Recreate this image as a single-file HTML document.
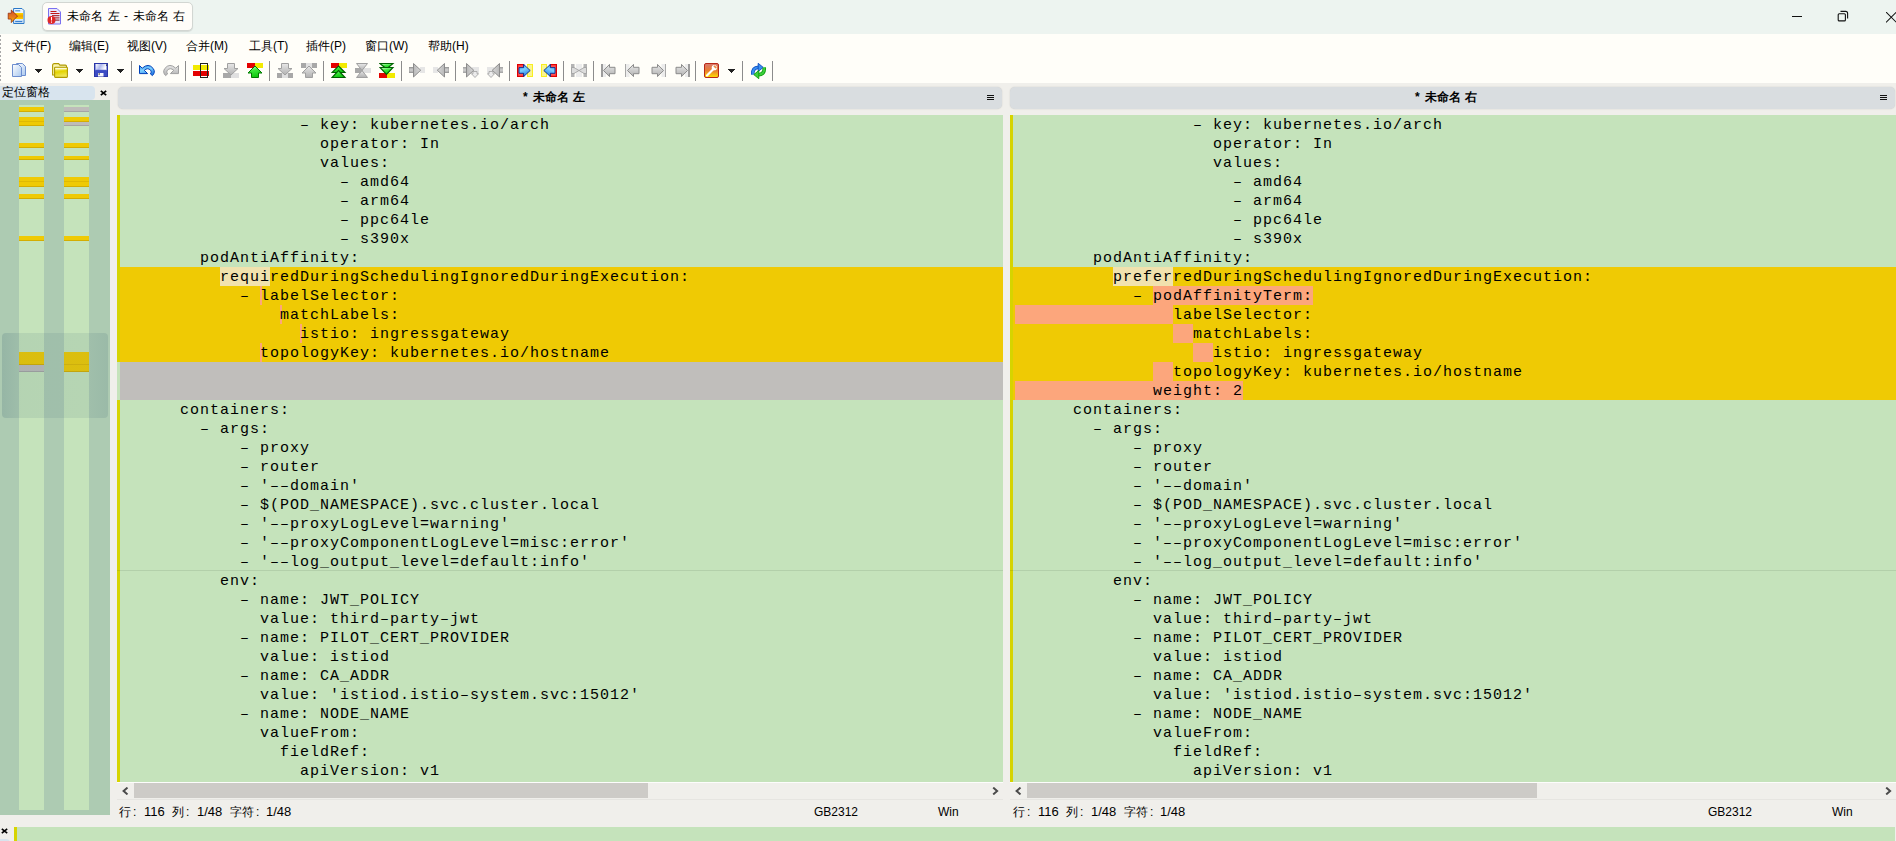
<!DOCTYPE html>
<html><head><meta charset="utf-8"><style>
*{margin:0;padding:0;box-sizing:border-box}
html,body{width:1896px;height:841px;overflow:hidden;background:#f0efeb;font-family:"Liberation Sans",sans-serif;font-size:12px;color:#000}
.abs{position:absolute}
.code{position:absolute;background:#c5e3bb;overflow:hidden}
.ln{position:absolute;font-family:"Liberation Mono",monospace;font-size:15px;letter-spacing:1px;line-height:19px;height:19px;white-space:pre;color:#000}
#title{position:absolute;left:0;top:0;width:1896px;height:34px;background:#edf4f0}
#menu{position:absolute;left:0;top:34px;width:1896px;height:49px;background:#fffef9}
.mi{position:absolute;top:38px;line-height:16px;font-size:12px}
.sep{position:absolute;top:61px;width:1px;height:20px;background:#8c8c8c}
.hdr{position:absolute;top:87px;height:22px;background:#d9dde0;border-radius:5px;box-shadow:0 0 1.5px rgba(0,0,0,.18);font-weight:bold;text-align:center;line-height:23px}
.sb{position:absolute;top:782px;height:18px;background:#f0efeb;border-top:1px solid #fdfdfc;border-bottom:1px solid #e6e5e1}
.thumb{position:absolute;top:0;height:15px;background:#cdcbc7}
.ht{top:89px;line-height:16px;font-size:12px;font-weight:bold}
.st{position:absolute;top:804px;line-height:16px;font-size:12px}
</style></head>
<body>
<div id="title"></div>
<div class="abs" style="left:42px;top:2px;width:151px;height:29px;background:#fffdf9;border:1px solid #d2d6d2;border-radius:5px;box-shadow:0 1px 1px rgba(0,0,0,.10)"></div>
<div class="abs" style="left:67px;top:8px;line-height:16px;font-size:12px;word-spacing:1.2px">未命名 左 - 未命名 右</div>
<svg class="abs" style="left:7px;top:7px" width="18" height="18" viewBox="0 0 18 18"><defs><linearGradient id="garr" x1="0" y1="0" x2="0" y2="1"><stop offset="0" stop-color="#d04a2a"/><stop offset="0.6" stop-color="#e8801c"/><stop offset="1" stop-color="#ffc000"/></linearGradient><linearGradient id="gband" x1="0" y1="0" x2="0" y2="1"><stop offset="0" stop-color="#ffd800"/><stop offset="0.5" stop-color="#f0a000"/><stop offset="1" stop-color="#ffd000"/></linearGradient></defs><path d="M6.6 1.5h8.4l2 2v13h-10.4z" fill="#eef5fc" stroke="#2a78c8"/><rect x="8.2" y="3.2" width="5" height="1.2" fill="#4a90d8"/><rect x="7.2" y="6" width="8.9" height="6" fill="url(#gband)"/><rect x="7.2" y="12.5" width="8.9" height="3.2" fill="#c4dcf4"/><rect x="8.2" y="14" width="7" height="1.1" fill="#3a80d0"/><path d="M1.2 6.2h3.1v-3.2l6.2 6l-6.2 6.6v-3.5h-3.1z" fill="url(#garr)" stroke="#8a2000" stroke-width="0.7"/></svg>
<svg class="abs" style="left:47px;top:7px" width="16" height="18" viewBox="0 0 16 18"><path d="M1.5 1.5h8.5l3.5 3.5v12h-12z" fill="#e8e6fc" stroke="#7a70f0"/><rect x="3.5" y="4" width="6" height="1" fill="#c01818"/><rect x="3.5" y="6" width="9" height="1" fill="#c01818"/><rect x="5" y="8.2" width="7.5" height="1" fill="#a01010"/><rect x="5" y="10.4" width="7.5" height="1" fill="#a01010"/><rect x="5" y="12.6" width="7.5" height="1" fill="#801010"/><circle cx="4.5" cy="13" r="4" fill="#e02828"/><rect x="4" y="10" width="1" height="3.5" fill="#fff"/><rect x="4" y="14.5" width="1" height="1.2" fill="#fff"/></svg>
<svg class="abs" style="left:1792px;top:16px" width="10" height="1" viewBox="0 0 10 1" shape-rendering="crispEdges"><rect x="0" y="0" width="10" height="1" fill="#111"/></svg>
<svg class="abs" style="left:1837px;top:10px" width="12" height="12" viewBox="0 0 12 12"><rect x="1.2" y="3.7" width="7.2" height="7.2" rx="1" fill="none" stroke="#111" stroke-width="1.1"/><path d="M3.5 1.4h5.1q2 0 2 2v5.1" fill="none" stroke="#111" stroke-width="1.1"/></svg>
<svg class="abs" style="left:1886px;top:12px" width="11" height="11" viewBox="0 0 11 11"><path d="M0 0l10.5 10.5M10.5 0l-10.5 10.5" stroke="#111" stroke-width="1.05"/></svg>
<div id="menu"></div>
<div class="mi" style="left:12px">文件(F)</div>
<div class="mi" style="left:69px">编辑(E)</div>
<div class="mi" style="left:127px">视图(V)</div>
<div class="mi" style="left:186px">合并(M)</div>
<div class="mi" style="left:249px">工具(T)</div>
<div class="mi" style="left:306px">插件(P)</div>
<div class="mi" style="left:365px">窗口(W)</div>
<div class="mi" style="left:428px">帮助(H)</div>
<div class="sep" style="left:131px"></div>
<div class="sep" style="left:185px"></div>
<div class="sep" style="left:215px"></div>
<div class="sep" style="left:269px"></div>
<div class="sep" style="left:323px"></div>
<div class="sep" style="left:401px"></div>
<div class="sep" style="left:455px"></div>
<div class="sep" style="left:509px"></div>
<div class="sep" style="left:563px"></div>
<div class="sep" style="left:593px"></div>
<div class="sep" style="left:695px"></div>
<div class="sep" style="left:742px"></div>
<div class="sep" style="left:772px"></div>
<svg class="abs" style="left:0px;top:0px" width="1" height="1" viewBox="0 0 1 1"><defs>
<linearGradient id="gpage" x1="0" y1="0" x2="1" y2="1"><stop offset="0" stop-color="#ffffff"/><stop offset="1" stop-color="#a9c8ee"/></linearGradient>
<linearGradient id="gfold" x1="0" y1="0" x2="0.2" y2="1"><stop offset="0" stop-color="#fff8b0"/><stop offset="0.5" stop-color="#e4d400"/><stop offset="1" stop-color="#f0e860"/></linearGradient>
<linearGradient id="ggreen" x1="0" y1="0" x2="0.3" y2="1"><stop offset="0" stop-color="#e0ffe0"/><stop offset="0.45" stop-color="#3ce83c"/><stop offset="1" stop-color="#10c810"/></linearGradient>
<linearGradient id="ggray" x1="0" y1="0" x2="0" y2="1"><stop offset="0" stop-color="#e8e8e8"/><stop offset="1" stop-color="#b0b0b0"/></linearGradient>
<linearGradient id="gblue" x1="0" y1="0" x2="0.4" y2="1"><stop offset="0" stop-color="#3a98f0"/><stop offset="0.5" stop-color="#7cd0ff"/><stop offset="1" stop-color="#2a80e8"/></linearGradient>
<linearGradient id="gwrench" x1="0" y1="0" x2="0" y2="1"><stop offset="0" stop-color="#d87870"/><stop offset="0.5" stop-color="#e87c30"/><stop offset="1" stop-color="#ffe000"/></linearGradient>
<linearGradient id="ggray2" x1="0" y1="0" x2="0" y2="1"><stop offset="0" stop-color="#a0a0a0"/><stop offset="0.5" stop-color="#d0d0d0"/><stop offset="1" stop-color="#a0a0a0"/></linearGradient><linearGradient id="ggray3" x1="0" y1="0" x2="1" y2="0"><stop offset="0" stop-color="#b8b8b8"/><stop offset="1" stop-color="#d8d8d8"/></linearGradient>
</defs></svg>
<svg class="abs" style="left:12px;top:63px" width="16" height="16" viewBox="0 0 16 16"><path d="M4.5 0.5h6l3 3v9h-9z" fill="url(#gpage)" stroke="#6d8ecf"/><path d="M0.5 1.5h6l3 3v9h-9z" fill="url(#gpage)" stroke="#6d8ecf"/></svg>
<svg class="abs" style="left:35px;top:69px" width="7" height="4" viewBox="0 0 7 4" shape-rendering="crispEdges"><path d="M0 0h7l-3.5 4z" fill="#222"/></svg>
<svg class="abs" style="left:76px;top:69px" width="7" height="4" viewBox="0 0 7 4" shape-rendering="crispEdges"><path d="M0 0h7l-3.5 4z" fill="#222"/></svg>
<svg class="abs" style="left:117px;top:69px" width="7" height="4" viewBox="0 0 7 4" shape-rendering="crispEdges"><path d="M0 0h7l-3.5 4z" fill="#222"/></svg>
<svg class="abs" style="left:52px;top:63px" width="16" height="15" viewBox="0 0 16 15"><path d="M0.6 12V2.3Q0.6 0.6 2.3 0.6H6.6L7.9 2.1H13.4Q14.5 2.1 14.5 3.2V12Z" fill="#faf4b0" stroke="#b09a00" stroke-width="1.1"/><rect x="2.6" y="4.3" width="12.8" height="10.1" rx="0.8" fill="url(#gfold)" stroke="#b09a00" stroke-width="1.1"/><rect x="3.3" y="5.1" width="11.4" height="1.2" fill="#fffbe0"/></svg>
<svg class="abs" style="left:94px;top:63px" width="14" height="14" viewBox="0 0 14 14"><defs><linearGradient id="glab" x1="0" y1="0" x2="1" y2="0.3"><stop offset="0" stop-color="#ffffff"/><stop offset="0.5" stop-color="#aeb8ee"/><stop offset="1" stop-color="#ffffff"/></linearGradient></defs><rect x="0.5" y="0.5" width="13" height="13" fill="#3c4cc4" stroke="#2a36a8"/><rect x="1.5" y="1" width="11" height="6.2" fill="url(#glab)"/><rect x="2" y="6.8" width="10" height="1" fill="#3c4cc4"/><rect x="4" y="10" width="5.5" height="3.5" fill="#f4f4fc"/><rect x="4.6" y="10.4" width="1.2" height="1.2" fill="#111"/><rect x="12" y="1.6" width="1" height="1" fill="#111"/></svg>
<svg class="abs" style="left:139px;top:64px" width="16" height="13" viewBox="0 0 16 13"><path d="M0.5 1.5L3.2 4.2Q9.5 -1.5 14.2 4.5Q16.8 8.2 13.4 11.6L11.4 9.9Q13.2 8 11.6 6.2Q8.6 3.2 5.3 6.3L8.6 9.6L0.5 9.6Z" fill="url(#gblue)" stroke="#0040b8" stroke-width="1"/></svg>
<svg class="abs" style="left:163px;top:64px" width="16" height="13" viewBox="0 0 16 13"><g transform="translate(16 0) scale(-1 1)"><path d="M0.5 1.5L3.2 4.2Q9.5 -1.5 14.2 4.5Q16.8 8.2 13.4 11.6L11.4 9.9Q13.2 8 11.6 6.2Q8.6 3.2 5.3 6.3L8.6 9.6L0.5 9.6Z" fill="url(#ggray)" stroke="#a0a0a0" stroke-width="1"/></g></svg>
<svg class="abs" style="left:193px;top:63px" width="16" height="16" viewBox="0 0 16 16" shape-rendering="crispEdges"><rect x="0" y="2" width="16" height="5" fill="#f2ea00"/><rect x="0" y="8" width="16" height="5" fill="#e40000"/><rect x="7.5" y="0.5" width="7" height="14" fill="none" stroke="#222"/></svg>
<svg class="abs" style="left:223px;top:63px" width="16" height="16" viewBox="0 0 16 16"><rect x="0" y="10" width="8" height="5" fill="#a8a8a8"/><rect x="8" y="10" width="8" height="5" fill="#e0e0e0"/><path d="M4.5 0.5h7v5h3.5l-7 6.5l-7-6.5h3.5z" fill="url(#ggray)" stroke="#a0a0a0"/></svg>
<svg class="abs" style="left:247px;top:63px" width="16" height="16" viewBox="0 0 16 16"><rect x="0" y="0" width="8" height="5" fill="#e40000"/><rect x="8" y="0" width="8" height="5" fill="#f2ea00"/><path d="M8 3l7 7h-3.5v4.5h-7v-4.5h-3.5z" fill="url(#ggreen)" stroke="#007a00"/></svg>
<svg class="abs" style="left:277px;top:63px" width="16" height="16" viewBox="0 0 16 16"><rect x="0" y="10" width="5" height="5" fill="#a8a8a8"/><rect x="5" y="10" width="6" height="5" fill="#e0e0e0"/><rect x="11" y="10" width="5" height="5" fill="#a8a8a8"/><path d="M4.5 0.5h7v5h3.5l-7 6.5l-7-6.5h3.5z" fill="url(#ggray)" stroke="#a0a0a0"/></svg>
<svg class="abs" style="left:301px;top:63px" width="16" height="16" viewBox="0 0 16 16"><rect x="0" y="0" width="5" height="5" fill="#a8a8a8"/><rect x="5" y="0" width="6" height="5" fill="#e0e0e0"/><rect x="11" y="0" width="5" height="5" fill="#a8a8a8"/><path d="M8 3l7 7h-3.5v4.5h-7v-4.5h-3.5z" fill="url(#ggray)" stroke="#a0a0a0"/></svg>
<svg class="abs" style="left:331px;top:63px" width="16" height="16" viewBox="0 0 16 16"><rect x="0" y="0" width="8" height="5" fill="#e40000"/><rect x="8" y="0" width="8" height="5" fill="#f2ea00"/><path d="M7.5 3l6.5 6.5h-13z" fill="url(#ggreen)" stroke="#006000" stroke-width="1.15"/><path d="M7.5 7.5l6.5 7h-13z" fill="url(#ggreen)" stroke="#006000" stroke-width="1.15"/></svg>
<svg class="abs" style="left:355px;top:63px" width="16" height="16" viewBox="0 0 16 16"><rect x="0" y="5" width="8" height="5" fill="#a8a8a8"/><rect x="8" y="5" width="8" height="5" fill="#e0e0e0"/><path d="M1.5 0.5h11l-5.5 7z" fill="url(#ggray)" stroke="#a0a0a0"/><path d="M7 7.5l5.5 7h-11z" fill="url(#ggray)" stroke="#a0a0a0"/></svg>
<svg class="abs" style="left:379px;top:63px" width="16" height="16" viewBox="0 0 16 16"><rect x="0" y="10" width="8" height="5" fill="#e40000"/><rect x="8" y="10" width="8" height="5" fill="#f2ea00"/><path d="M1 0.5h13l-6.5 5.5z" fill="url(#ggreen)" stroke="#006000" stroke-width="1.15"/><path d="M1 4.5h13l-6.5 7z" fill="url(#ggreen)" stroke="#006000" stroke-width="1.15"/></svg>
<svg class="abs" style="left:409px;top:63px" width="16" height="15" viewBox="0 0 16 15"><rect x="11" y="4" width="5" height="6" fill="#e6e6e6"/><rect x="0" y="4" width="5" height="6" fill="url(#ggray2)" /><rect x="0" y="4.5" width="5" height="5" fill="none" stroke="#9a9a9a" stroke-width="0.8"/><path d="M4.5 0.5V14L11.7 7.2z" fill="url(#ggray3)" stroke="#8c8c8c"/></svg>
<svg class="abs" style="left:433px;top:63px" width="16" height="15" viewBox="0 0 16 15"><g transform="translate(16 0) scale(-1 1)"><rect x="11" y="4" width="5" height="6" fill="#e6e6e6"/><rect x="0" y="4" width="5" height="6" fill="url(#ggray2)" /><rect x="0" y="4.5" width="5" height="5" fill="none" stroke="#9a9a9a" stroke-width="0.8"/><path d="M4.5 0.5V14L11.7 7.2z" fill="url(#ggray3)" stroke="#8c8c8c"/></g></svg>
<svg class="abs" style="left:463px;top:63px" width="16" height="16" viewBox="0 0 16 16"><rect x="9" y="4" width="7" height="6" fill="#e6e6e6"/><rect x="0" y="4" width="4" height="6" fill="url(#ggray2)"/><path d="M3.5 0.5V14L10.7 7.2z" fill="url(#ggray3)" stroke="#8c8c8c"/><path d="M10 8.5h4v2.2h1.6l-3.6 3.8l-3.6-3.8h1.6z" fill="#ececec" stroke="#a8a8a8" stroke-width="0.9"/></svg>
<svg class="abs" style="left:487px;top:63px" width="16" height="16" viewBox="0 0 16 16"><g transform="translate(16 0) scale(-1 1)"><rect x="9" y="4" width="7" height="6" fill="#e6e6e6"/><rect x="0" y="4" width="4" height="6" fill="url(#ggray2)"/><path d="M3.5 0.5V14L10.7 7.2z" fill="url(#ggray3)" stroke="#8c8c8c"/><path d="M10 8.5h4v2.2h1.6l-3.6 3.8l-3.6-3.8h1.6z" fill="#ececec" stroke="#a8a8a8" stroke-width="0.9"/></g></svg>
<svg class="abs" style="left:517px;top:64px" width="17" height="13" viewBox="0 0 17 13"><rect x="0.6" y="0.6" width="6" height="11.8" fill="#ff5050" stroke="#e00000" stroke-width="1.2"/><rect x="10" y="0" width="6" height="13" fill="#f8ee20"/><rect x="11" y="1" width="4" height="11" fill="#faf490"/><path d="M2 3.6h4.6V0.4l6.6 6.1l-6.6 6.1V9.3H2z" fill="url(#gblue)" stroke="#002a90" stroke-width="0.9"/></svg>
<svg class="abs" style="left:541px;top:64px" width="17" height="13" viewBox="0 0 17 13"><g transform="translate(16 0) scale(-1 1)"><rect x="0.6" y="0.6" width="6" height="11.8" fill="#ff5050" stroke="#e00000" stroke-width="1.2"/><rect x="10" y="0" width="6" height="13" fill="#f8ee20"/><rect x="11" y="1" width="4" height="11" fill="#faf490"/><path d="M2 3.6h4.6V0.4l6.6 6.1l-6.6 6.1V9.3H2z" fill="url(#gblue)" stroke="#002a90" stroke-width="0.9"/></g></svg>
<svg class="abs" style="left:571px;top:64px" width="16" height="13" viewBox="0 0 16 13"><rect x="0" y="0" width="3.5" height="13" fill="#b4b4b4"/><rect x="12.5" y="0" width="3.5" height="13" fill="#b4b4b4"/><rect x="5" y="0" width="6" height="13" fill="#ececec"/><path d="M0.5 3.5h2.5l5 3l-5 3h-2.5zM15.5 3.5h-2.5l-5 3l5 3h2.5z" fill="#dcdcdc" stroke="#9c9c9c" stroke-width="0.8"/></svg>
<svg class="abs" style="left:601px;top:64px" width="15" height="13" viewBox="0 0 15 13"><rect x="0" y="0" width="2" height="13" fill="#9c9c9c"/><rect x="2" y="0" width="3" height="13" fill="#ececec"/><path d="M14 3.3h-5.5V0.4l-6 6.1l6 6.1V9.7h5.5z" fill="url(#ggray)" stroke="#8c8c8c"/></svg>
<svg class="abs" style="left:625px;top:64px" width="15" height="13" viewBox="0 0 15 13"><rect x="0" y="0" width="1" height="13" fill="#a8a8a8"/><rect x="1" y="0" width="3.5" height="13" fill="#ececec"/><path d="M14 3.3h-5.5V0.4l-6 6.1l6 6.1V9.7h5.5z" fill="url(#ggray)" stroke="#8c8c8c"/></svg>
<svg class="abs" style="left:651px;top:64px" width="15" height="13" viewBox="0 0 15 13"><g transform="translate(15 0) scale(-1 1)"><rect x="0" y="0" width="1" height="13" fill="#a8a8a8"/><rect x="1" y="0" width="3.5" height="13" fill="#ececec"/><path d="M14 3.3h-5.5V0.4l-6 6.1l6 6.1V9.7h5.5z" fill="url(#ggray)" stroke="#8c8c8c"/></g></svg>
<svg class="abs" style="left:675px;top:64px" width="15" height="13" viewBox="0 0 15 13"><g transform="translate(15 0) scale(-1 1)"><rect x="0" y="0" width="2" height="13" fill="#9c9c9c"/><rect x="2" y="0" width="3" height="13" fill="#ececec"/><path d="M14 3.3h-5.5V0.4l-6 6.1l6 6.1V9.7h5.5z" fill="url(#ggray)" stroke="#8c8c8c"/></g></svg>
<svg class="abs" style="left:704px;top:63px" width="15" height="15" viewBox="0 0 15 15"><rect x="0.5" y="0.5" width="14" height="14" rx="1.5" fill="url(#gwrench)" stroke="#b82818"/><path d="M3 12.5l6.2-6.2" stroke="#fff" stroke-width="2.2" stroke-linecap="round"/><circle cx="10.3" cy="4.7" r="2.6" fill="#fff"/><path d="M10.6 2.2l2.2 2.2l-1.2 1.2l-2.2-2.2z" fill="#e88a40"/></svg>
<svg class="abs" style="left:728px;top:69px" width="7" height="4" viewBox="0 0 7 4" shape-rendering="crispEdges"><path d="M0 0h7l-3.5 4z" fill="#222"/></svg>
<svg class="abs" style="left:750px;top:63px" width="17" height="16" viewBox="0 0 17 16"><path d="M2.8 11.5Q2.2 4.6 8.6 4.3" fill="none" stroke="#0a4cc0" stroke-width="3.6"/><path d="M2.8 11.5Q2.2 4.6 8.6 4.3" fill="none" stroke="#3a8ef0" stroke-width="2"/><path d="M8.2 0.3L13.2 4.4L8.2 8.5z" fill="#3a8ef0" stroke="#0a4cc0" stroke-width="0.9"/><path d="M14.2 4.5Q14.8 11.4 8.4 11.7" fill="none" stroke="#0a9a0a" stroke-width="3.6"/><path d="M14.2 4.5Q14.8 11.4 8.4 11.7" fill="none" stroke="#3cd03c" stroke-width="2"/><path d="M8.8 7.5L3.8 11.6L8.8 15.7z" fill="#3cd03c" stroke="#0a9a0a" stroke-width="0.9"/></svg>
<div class="abs" style="left:0;top:35px;width:1px;height:47px;background:repeating-linear-gradient(#a8a8a8 0 2px, transparent 2px 4px)"></div>
<div class="abs" style="left:0;top:86px;width:95px;height:14px;background:#d8e4ee;border-radius:0 4px 4px 0"></div>
<div class="abs" style="left:2px;top:84px;line-height:16px;font-size:12px">定位窗格</div>
<svg class="abs" style="left:100px;top:90px" width="7" height="6" viewBox="0 0 7 6"><path d="M0.8 0.8l5.4 4.4M6.2 0.8l-5.4 4.4" stroke="#000" stroke-width="1.7"/></svg>
<div class="abs" style="left:0;top:100px;width:110px;height:715px;background:#adcbb2"></div>
<div class="abs" style="left:19px;top:105px;width:25px;height:705px;background:#c5e3bb"></div>
<div class="abs" style="left:64px;top:105px;width:25px;height:705px;background:#c5e3bb"></div>
<div class="abs" style="left:19px;top:107px;width:25px;height:5px;background:#efca04;border-bottom:1px solid rgba(160,120,0,.35)"></div>
<div class="abs" style="left:64px;top:107px;width:25px;height:5px;background:#bebcba;border-bottom:1px solid rgba(120,120,120,.35)"></div>
<div class="abs" style="left:19px;top:117px;width:25px;height:9px;background:#efca04;border-bottom:1px solid rgba(160,120,0,.35)"></div>
<div class="abs" style="left:64px;top:117px;width:25px;height:5px;background:#efca04;border-bottom:1px solid rgba(160,120,0,.35)"></div>
<div class="abs" style="left:64px;top:122px;width:25px;height:4px;background:#bebcba;border-bottom:1px solid rgba(120,120,120,.35)"></div>
<div class="abs" style="left:19px;top:143px;width:25px;height:5px;background:#efca04;border-bottom:1px solid rgba(160,120,0,.35)"></div>
<div class="abs" style="left:64px;top:143px;width:25px;height:5px;background:#efca04;border-bottom:1px solid rgba(160,120,0,.35)"></div>
<div class="abs" style="left:19px;top:156px;width:25px;height:4px;background:#efca04;border-bottom:1px solid rgba(160,120,0,.35)"></div>
<div class="abs" style="left:64px;top:156px;width:25px;height:4px;background:#efca04;border-bottom:1px solid rgba(160,120,0,.35)"></div>
<div class="abs" style="left:19px;top:177px;width:25px;height:10px;background:#efca04;border-bottom:1px solid rgba(160,120,0,.35)"></div>
<div class="abs" style="left:64px;top:177px;width:25px;height:10px;background:#efca04;border-bottom:1px solid rgba(160,120,0,.35)"></div>
<div class="abs" style="left:19px;top:194px;width:25px;height:5px;background:#efca04;border-bottom:1px solid rgba(160,120,0,.35)"></div>
<div class="abs" style="left:64px;top:194px;width:25px;height:5px;background:#efca04;border-bottom:1px solid rgba(160,120,0,.35)"></div>
<div class="abs" style="left:19px;top:236px;width:25px;height:5px;background:#efca04;border-bottom:1px solid rgba(160,120,0,.35)"></div>
<div class="abs" style="left:64px;top:236px;width:25px;height:5px;background:#efca04;border-bottom:1px solid rgba(160,120,0,.35)"></div>
<div class="abs" style="left:19px;top:352px;width:25px;height:13px;background:#efca04;border-bottom:1px solid rgba(160,120,0,.35)"></div>
<div class="abs" style="left:19px;top:365px;width:25px;height:7px;background:#bebcba;border-bottom:1px solid rgba(120,120,120,.35)"></div>
<div class="abs" style="left:64px;top:352px;width:25px;height:20px;background:#efca04;border-bottom:1px solid rgba(160,120,0,.35)"></div>
<div class="abs" style="left:19px;top:121px;width:25px;height:1px;background:rgba(160,120,0,.2)"></div>
<div class="abs" style="left:19px;top:181px;width:25px;height:1px;background:rgba(160,120,0,.2)"></div>
<div class="abs" style="left:64px;top:181px;width:25px;height:1px;background:rgba(160,120,0,.2)"></div>
<div class="abs" style="left:64px;top:364px;width:25px;height:1px;background:rgba(160,120,0,.2)"></div>
<div class="abs" style="left:2px;top:333px;width:106px;height:85px;background:linear-gradient(90deg,rgba(50,90,110,.19),rgba(50,90,110,.11) 18%,rgba(50,90,110,.10) 80%,rgba(50,90,110,.15));border-radius:4px"></div>
<div class="hdr" style="left:118px;width:884px"></div>
<div class="hdr" style="left:1010px;width:885px"></div>
<div class="abs ht" style="left:523px">*</div><div class="abs ht" style="left:533px">未命名</div><div class="abs ht" style="left:573px">左</div>
<div class="abs ht" style="left:1415px">*</div><div class="abs ht" style="left:1425px">未命名</div><div class="abs ht" style="left:1465px">右</div>
<div class="code" style="left:117px;top:115px;width:886px;height:667px;">
<div class="abs" style="left:0;top:0;width:3px;height:100%;background:#d6d400"></div>
<div class="abs" style="left:3px;top:152px;width:883px;height:19px;background:#efca04"></div>
<div class="abs" style="left:3px;top:171px;width:883px;height:19px;background:#efca04"></div>
<div class="abs" style="left:3px;top:190px;width:883px;height:19px;background:#efca04"></div>
<div class="abs" style="left:3px;top:209px;width:883px;height:19px;background:#efca04"></div>
<div class="abs" style="left:3px;top:228px;width:883px;height:19px;background:#efca04"></div>
<div class="abs" style="left:0;top:247px;width:3px;height:19px;background:#c5e3bb"></div>
<div class="abs" style="left:3px;top:247px;width:883px;height:19px;background:#c0bebb"></div>
<div class="abs" style="left:0;top:266px;width:3px;height:19px;background:#c5e3bb"></div>
<div class="abs" style="left:3px;top:266px;width:883px;height:19px;background:#c0bebb"></div>
<div class="abs" style="left:103px;top:152px;width:50px;height:19px;background:#f1e2ae"></div>
<div class="abs" style="left:143px;top:171px;width:2px;height:19px;background:#fca67c"></div>
<div class="abs" style="left:163px;top:190px;width:2px;height:19px;background:#fca67c"></div>
<div class="abs" style="left:183px;top:209px;width:2px;height:19px;background:#fca67c"></div>
<div class="abs" style="left:143px;top:228px;width:2px;height:19px;background:#fca67c"></div>
<div class="abs" style="left:0;top:455px;width:100%;height:1px;background:rgba(0,24,0,.09)"></div>
<div class="ln" style="left:183px;top:1px">&#8211; key: kubernetes.io/arch</div>
<div class="ln" style="left:203px;top:20px">operator: In</div>
<div class="ln" style="left:203px;top:39px">values:</div>
<div class="ln" style="left:223px;top:58px">&#8211; amd64</div>
<div class="ln" style="left:223px;top:77px">&#8211; arm64</div>
<div class="ln" style="left:223px;top:96px">&#8211; ppc64le</div>
<div class="ln" style="left:223px;top:115px">&#8211; s390x</div>
<div class="ln" style="left:83px;top:134px">podAntiAffinity:</div>
<div class="ln" style="left:103px;top:153px">requiredDuringSchedulingIgnoredDuringExecution:</div>
<div class="ln" style="left:123px;top:172px">&#8211; labelSelector:</div>
<div class="ln" style="left:163px;top:191px">matchLabels:</div>
<div class="ln" style="left:183px;top:210px">istio: ingressgateway</div>
<div class="ln" style="left:143px;top:229px">topologyKey: kubernetes.io/hostname</div>
<div class="ln" style="left:63px;top:286px">containers:</div>
<div class="ln" style="left:83px;top:305px">&#8211; args:</div>
<div class="ln" style="left:123px;top:324px">&#8211; proxy</div>
<div class="ln" style="left:123px;top:343px">&#8211; router</div>
<div class="ln" style="left:123px;top:362px">&#8211; &#x27;&#8211;&#8211;domain&#x27;</div>
<div class="ln" style="left:123px;top:381px">&#8211; $(POD_NAMESPACE).svc.cluster.local</div>
<div class="ln" style="left:123px;top:400px">&#8211; &#x27;&#8211;&#8211;proxyLogLevel=warning&#x27;</div>
<div class="ln" style="left:123px;top:419px">&#8211; &#x27;&#8211;&#8211;proxyComponentLogLevel=misc:error&#x27;</div>
<div class="ln" style="left:123px;top:438px">&#8211; &#x27;&#8211;&#8211;log_output_level=default:info&#x27;</div>
<div class="ln" style="left:103px;top:457px">env:</div>
<div class="ln" style="left:123px;top:476px">&#8211; name: JWT_POLICY</div>
<div class="ln" style="left:143px;top:495px">value: third&#8211;party&#8211;jwt</div>
<div class="ln" style="left:123px;top:514px">&#8211; name: PILOT_CERT_PROVIDER</div>
<div class="ln" style="left:143px;top:533px">value: istiod</div>
<div class="ln" style="left:123px;top:552px">&#8211; name: CA_ADDR</div>
<div class="ln" style="left:143px;top:571px">value: &#x27;istiod.istio&#8211;system.svc:15012&#x27;</div>
<div class="ln" style="left:123px;top:590px">&#8211; name: NODE_NAME</div>
<div class="ln" style="left:143px;top:609px">valueFrom:</div>
<div class="ln" style="left:163px;top:628px">fieldRef:</div>
<div class="ln" style="left:183px;top:647px">apiVersion: v1</div>
</div>
<div class="code" style="left:1010px;top:115px;width:886px;height:667px;">
<div class="abs" style="left:0;top:0;width:3px;height:100%;background:#d6d400"></div>
<div class="abs" style="left:3px;top:152px;width:883px;height:19px;background:#efca04"></div>
<div class="abs" style="left:3px;top:171px;width:883px;height:19px;background:#efca04"></div>
<div class="abs" style="left:3px;top:190px;width:883px;height:19px;background:#efca04"></div>
<div class="abs" style="left:3px;top:209px;width:883px;height:19px;background:#efca04"></div>
<div class="abs" style="left:3px;top:228px;width:883px;height:19px;background:#efca04"></div>
<div class="abs" style="left:3px;top:247px;width:883px;height:19px;background:#efca04"></div>
<div class="abs" style="left:3px;top:266px;width:883px;height:19px;background:#efca04"></div>
<div class="abs" style="left:103px;top:152px;width:60px;height:19px;background:#f1e2ae"></div>
<div class="abs" style="left:143px;top:171px;width:160px;height:19px;background:#fca67c"></div>
<div class="abs" style="left:5px;top:190px;width:158px;height:19px;background:#fca67c"></div>
<div class="abs" style="left:163px;top:209px;width:20px;height:19px;background:#fca67c"></div>
<div class="abs" style="left:183px;top:228px;width:20px;height:19px;background:#fca67c"></div>
<div class="abs" style="left:143px;top:247px;width:20px;height:19px;background:#fca67c"></div>
<div class="abs" style="left:5px;top:266px;width:228px;height:19px;background:#fca67c"></div>
<div class="abs" style="left:0;top:455px;width:100%;height:1px;background:rgba(0,24,0,.09)"></div>
<div class="ln" style="left:183px;top:1px">&#8211; key: kubernetes.io/arch</div>
<div class="ln" style="left:203px;top:20px">operator: In</div>
<div class="ln" style="left:203px;top:39px">values:</div>
<div class="ln" style="left:223px;top:58px">&#8211; amd64</div>
<div class="ln" style="left:223px;top:77px">&#8211; arm64</div>
<div class="ln" style="left:223px;top:96px">&#8211; ppc64le</div>
<div class="ln" style="left:223px;top:115px">&#8211; s390x</div>
<div class="ln" style="left:83px;top:134px">podAntiAffinity:</div>
<div class="ln" style="left:103px;top:153px">preferredDuringSchedulingIgnoredDuringExecution:</div>
<div class="ln" style="left:123px;top:172px">&#8211; podAffinityTerm:</div>
<div class="ln" style="left:163px;top:191px">labelSelector:</div>
<div class="ln" style="left:183px;top:210px">matchLabels:</div>
<div class="ln" style="left:203px;top:229px">istio: ingressgateway</div>
<div class="ln" style="left:163px;top:248px">topologyKey: kubernetes.io/hostname</div>
<div class="ln" style="left:143px;top:267px">weight: 2</div>
<div class="ln" style="left:63px;top:286px">containers:</div>
<div class="ln" style="left:83px;top:305px">&#8211; args:</div>
<div class="ln" style="left:123px;top:324px">&#8211; proxy</div>
<div class="ln" style="left:123px;top:343px">&#8211; router</div>
<div class="ln" style="left:123px;top:362px">&#8211; &#x27;&#8211;&#8211;domain&#x27;</div>
<div class="ln" style="left:123px;top:381px">&#8211; $(POD_NAMESPACE).svc.cluster.local</div>
<div class="ln" style="left:123px;top:400px">&#8211; &#x27;&#8211;&#8211;proxyLogLevel=warning&#x27;</div>
<div class="ln" style="left:123px;top:419px">&#8211; &#x27;&#8211;&#8211;proxyComponentLogLevel=misc:error&#x27;</div>
<div class="ln" style="left:123px;top:438px">&#8211; &#x27;&#8211;&#8211;log_output_level=default:info&#x27;</div>
<div class="ln" style="left:103px;top:457px">env:</div>
<div class="ln" style="left:123px;top:476px">&#8211; name: JWT_POLICY</div>
<div class="ln" style="left:143px;top:495px">value: third&#8211;party&#8211;jwt</div>
<div class="ln" style="left:123px;top:514px">&#8211; name: PILOT_CERT_PROVIDER</div>
<div class="ln" style="left:143px;top:533px">value: istiod</div>
<div class="ln" style="left:123px;top:552px">&#8211; name: CA_ADDR</div>
<div class="ln" style="left:143px;top:571px">value: &#x27;istiod.istio&#8211;system.svc:15012&#x27;</div>
<div class="ln" style="left:123px;top:590px">&#8211; name: NODE_NAME</div>
<div class="ln" style="left:143px;top:609px">valueFrom:</div>
<div class="ln" style="left:163px;top:628px">fieldRef:</div>
<div class="ln" style="left:183px;top:647px">apiVersion: v1</div>
</div>
<div class="sb" style="left:117px;width:886px"><div class="thumb" style="left:17px;width:514px"></div></div>
<div class="sb" style="left:1010px;width:886px"><div class="thumb" style="left:17px;width:510px"></div></div>
<svg class="abs" style="left:122px;top:787px" width="7" height="8" viewBox="0 0 7 8"><path d="M5.5 0.6L1.6 4L5.5 7.4" fill="none" stroke="#4a4a4a" stroke-width="2"/></svg>
<svg class="abs" style="left:1015px;top:787px" width="7" height="8" viewBox="0 0 7 8"><path d="M5.5 0.6L1.6 4L5.5 7.4" fill="none" stroke="#4a4a4a" stroke-width="2"/></svg>
<svg class="abs" style="left:992px;top:787px" width="7" height="8" viewBox="0 0 7 8"><path d="M1.2 0.6L5.1 4L1.2 7.4" fill="none" stroke="#4a4a4a" stroke-width="2"/></svg>
<svg class="abs" style="left:1885px;top:787px" width="7" height="8" viewBox="0 0 7 8"><path d="M1.2 0.6L5.1 4L1.2 7.4" fill="none" stroke="#4a4a4a" stroke-width="2"/></svg>
<svg class="abs" style="left:987px;top:95px" width="7" height="6" viewBox="0 0 7 6" shape-rendering="crispEdges"><rect x="0" y="0" width="7" height="1" fill="#111"/><rect x="0" y="2" width="7" height="1" fill="#111"/><rect x="0" y="4" width="7" height="1" fill="#111"/></svg>
<svg class="abs" style="left:1880px;top:95px" width="7" height="6" viewBox="0 0 7 6" shape-rendering="crispEdges"><rect x="0" y="0" width="7" height="1" fill="#111"/><rect x="0" y="2" width="7" height="1" fill="#111"/><rect x="0" y="4" width="7" height="1" fill="#111"/></svg>
<div class="st" style="left:119px">行</div>
<div class="st" style="left:133px">:</div>
<div class="st" style="left:144px;font-size:13px">116</div>
<div class="st" style="left:172px">列</div>
<div class="st" style="left:186px">:</div>
<div class="st" style="left:197px;font-size:13px">1/48</div>
<div class="st" style="left:230px">字符</div>
<div class="st" style="left:256px">:</div>
<div class="st" style="left:266px;font-size:13px">1/48</div>
<div class="st" style="left:1013px">行</div>
<div class="st" style="left:1027px">:</div>
<div class="st" style="left:1038px;font-size:13px">116</div>
<div class="st" style="left:1066px">列</div>
<div class="st" style="left:1080px">:</div>
<div class="st" style="left:1091px;font-size:13px">1/48</div>
<div class="st" style="left:1124px">字符</div>
<div class="st" style="left:1150px">:</div>
<div class="st" style="left:1160px;font-size:13px">1/48</div>
<div class="st" style="left:814px">GB2312</div>
<div class="st" style="left:1708px">GB2312</div>
<div class="st" style="left:938px">Win</div>
<div class="st" style="left:1832px">Win</div>
<div class="abs" style="left:14px;top:827px;width:1881px;height:14px;background:#c5e3bb"></div>
<div class="abs" style="left:14px;top:827px;width:3px;height:14px;background:#d6d400"></div>
<svg class="abs" style="left:1px;top:828px" width="7" height="6" viewBox="0 0 7 6"><path d="M0.8 0.8l5.4 4.4M6.2 0.8l-5.4 4.4" stroke="#000" stroke-width="1.6"/></svg>
<div class="abs" style="left:0;top:839px;width:10px;height:4px;background:#d8e4ee;border-radius:0 4px 0 0"></div>
</body></html>
